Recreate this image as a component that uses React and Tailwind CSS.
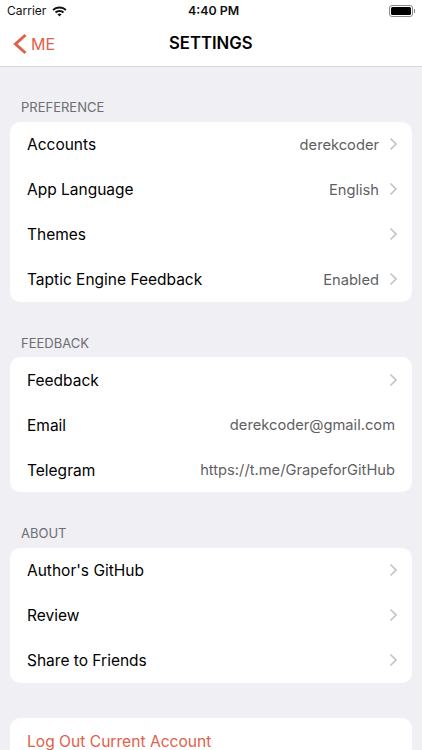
const font = { fontFamily: 'Inter, "Liberation Sans", sans-serif' }

const sections = [
  {
    title: 'PREFERENCE',
    rows: [
      { label: 'Accounts', value: 'derekcoder', arrow: true },
      { label: 'App Language', value: 'English', arrow: true },
      { label: 'Themes', arrow: true },
      { label: 'Taptic Engine Feedback', value: 'Enabled', arrow: true },
    ],
  },
  {
    title: 'FEEDBACK',
    rows: [
      { label: 'Feedback', arrow: true },
      { label: 'Email', value: 'derekcoder@gmail.com' },
      { label: 'Telegram', value: 'https://t.me/GrapeforGitHub' },
    ],
  },
  {
    title: 'ABOUT',
    rows: [
      { label: "Author's GitHub", arrow: true },
      { label: 'Review', arrow: true },
      { label: 'Share to Friends', arrow: true },
    ],
  },
]

function Chevron() {
  return (
    <svg width="9" height="14" viewBox="0 0 9 14" fill="none" className="ml-[10px] shrink-0">
      <path d="M1.5 1.5 L7 7 L1.5 12.5" stroke="#c4c4c8" strokeWidth="1.7" />
    </svg>
  )
}

function Row({ label, value, arrow }) {
  return (
    <div className={`flex items-center justify-between h-[45px] pl-[17px] ${arrow ? 'pr-[14px]' : 'pr-[17px]'}`}>
      <span className="text-[15.5px] text-black pt-[2px]">{label}</span>
      <div className="flex items-center">
        {value && <span className="text-[14.7px] text-[#5f5f63] pt-[2px]">{value}</span>}
        {arrow && <Chevron />}
      </div>
    </div>
  )
}

export default function App() {
  return (
    <div className="w-[422px] h-[750px] overflow-hidden bg-[#efeff4] flex flex-col" style={font}>
      <header className="bg-white border-b border-[#d8d8dc] h-[67px] shrink-0">
        <div className="relative flex items-center justify-between h-[22px] pl-[7px] pr-[7px] text-[12px] text-[#111]">
          <div className="flex items-center gap-[6px]">
            <span>Carrier</span>
            <svg width="15" height="11" viewBox="0 0 15 11" fill="#111">
              <path d="M7.5 0.5C4.7 0.5 2.2 1.6 0.4 3.4L1.8 4.8C3.3 3.4 5.3 2.5 7.5 2.5S11.7 3.4 13.2 4.8L14.6 3.4C12.8 1.6 10.3 0.5 7.5 0.5Z" />
              <path d="M7.5 4C5.7 4 4.1 4.7 2.9 5.9L4.3 7.3C5.1 6.5 6.2 6 7.5 6S9.9 6.5 10.7 7.3L12.1 5.9C10.9 4.7 9.3 4 7.5 4Z" />
              <path d="M7.5 7.4C6.7 7.4 6 7.7 5.4 8.3L7.5 10.5L9.6 8.3C9 7.7 8.3 7.4 7.5 7.4Z" />
            </svg>
          </div>
          <span className="absolute left-[188px] font-semibold text-[12.4px]">4:40 PM</span>
          <div className="flex items-center">
            <div className="w-[24px] h-[12px] rounded-[3px] border border-[#8a8a8a] p-[1px]">
              <div className="w-full h-full rounded-[1.5px] bg-black" />
            </div>
            <div className="w-[1px] h-[4px] ml-[1px] bg-[#8a8a8a]" />
          </div>
        </div>
        <div className="relative flex items-center h-[44px] pl-[13px]">
          <svg width="14" height="22" viewBox="0 0 14 22" fill="none">
            <path d="M12.5 2 L2.5 11 L12.5 20" stroke="#e0614a" strokeWidth="3" />
          </svg>
          <span className="ml-[4px] text-[16px] text-[#e0614a]">ME</span>
          <span className="absolute left-[169px] text-[16.7px] font-semibold text-black">SETTINGS</span>
        </div>
      </header>

      <main className="px-[10px] pt-[32px] flex flex-col">
        {sections.map(section => (
          <section key={section.title} className="mb-[33px]">
            <h2 className="pl-[11px] text-[13px] leading-[16px] font-normal text-[#6d6d72] mb-[6.5px]">{section.title}</h2>
            <div className="bg-white rounded-[10px]">
              {section.rows.map(row => (
                <Row key={row.label} {...row} />
              ))}
            </div>
          </section>
        ))}
        <div className="bg-white rounded-[10px] h-[45px] pl-[17px] flex items-center mt-[2.5px] shrink-0">
          <span className="text-[15.6px] text-[#e0614a] pt-[2px]">Log Out Current Account</span>
        </div>
      </main>
    </div>
  )
}
